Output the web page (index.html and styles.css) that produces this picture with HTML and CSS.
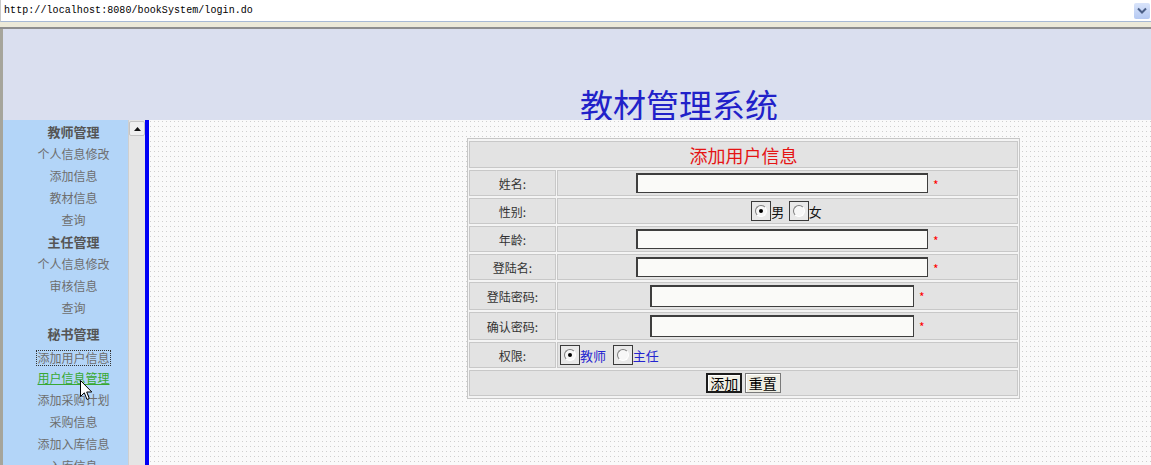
FILE: index.html
```html
<!DOCTYPE html>
<html lang="zh-CN">
<head>
<meta charset="UTF-8">
<meta name="viewport" content="width=device-width, initial-scale=1.0">
<title>教材管理系统</title>
<link rel="stylesheet" href="styles.css">
</head>
<body>
  <div class="addr">
    <div class="addr-box">
      <span class="url">http://localhost:8080/bookSystem/login.do</span>
      <span class="drop">
        <svg width="10" height="7" viewBox="0 0 10 7"><path d="M1 1.5 L5 5.5 L9 1.5" fill="none" stroke="#4b5f86" stroke-width="2"/></svg>
      </span>
    </div>
  </div>

  <div class="frame">
    <div class="header">
      <h1 class="title">教材管理系统</h1>
    </div>

    <div class="content">
      <div class="side">
        <div class="menu">
          <div class="group">教师管理</div>
          <div class="item">个人信息修改</div>
          <div class="item">添加信息</div>
          <div class="item">教材信息</div>
          <div class="item">查询</div>
          <div class="group">主任管理</div>
          <div class="item">个人信息修改</div>
          <div class="item">审核信息</div>
          <div class="item">查询</div>
          <div class="group group-gap">秘书管理</div>
          <div class="item"><span class="focus">添加用户信息</span></div>
          <div class="item"><span class="hover">用户信息管理</span></div>
          <div class="item">添加采购计划</div>
          <div class="item">采购信息</div>
          <div class="item">添加入库信息</div>
          <div class="item">入库信息</div>
        </div>
      </div>
      <div class="scroll">
        <div class="scroll-up">
          <svg width="7" height="4" viewBox="0 0 7 4"><path d="M0 4 L3.5 0 L7 4 Z" fill="#111"/></svg>
        </div>
      </div>
      <div class="split"></div>

      <div class="main">
        <table class="form">
          <colgroup>
            <col class="c-label">
            <col class="c-val">
          </colgroup>
          <tr class="r-title"><td colspan="2" class="caption">添加用户信息</td></tr>
          <tr class="r-26">
            <td class="label">姓名:</td>
            <td class="val"><input type="text" class="txt"> <span class="req">*</span></td>
          </tr>
          <tr class="r-26">
            <td class="label">性别:</td>
            <td class="val"><span class="radio checked"></span><span class="opt">男</span> <span class="radio"></span><span class="opt">女</span></td>
          </tr>
          <tr class="r-26">
            <td class="label">年龄:</td>
            <td class="val"><input type="text" class="txt"> <span class="req">*</span></td>
          </tr>
          <tr class="r-26">
            <td class="label">登陆名:</td>
            <td class="val"><input type="text" class="txt"> <span class="req">*</span></td>
          </tr>
          <tr class="r-28">
            <td class="label">登陆密码:</td>
            <td class="val"><input type="password" class="pwd"> <span class="req">*</span></td>
          </tr>
          <tr class="r-28">
            <td class="label">确认密码:</td>
            <td class="val"><input type="password" class="pwd"> <span class="req">*</span></td>
          </tr>
          <tr class="r-26">
            <td class="label">权限:</td>
            <td class="val val-left"><span class="radio checked"></span><span class="opt blue">教师</span> <span class="radio"></span><span class="opt blue">主任</span></td>
          </tr>
          <tr class="r-26">
            <td colspan="2" class="buttons">
              <button type="button" class="btn btn-default">添加</button>
              <button type="button" class="btn">重置</button>
            </td>
          </tr>
        </table>
      </div>
    </div>
  </div>

  <svg class="cursor" width="13" height="21" viewBox="0 0 13 21">
    <path d="M0.5 0.5 L0.5 16.5 L4.3 12.8 L7 19.5 L9.3 18.5 L6.7 12 L11.8 12 Z" fill="#fff" stroke="#000" stroke-width="1"/>
  </svg>
</body>
</html>
```

FILE: styles.css
```css
body {
  margin: 0;
  height: 465px;
  overflow: hidden;
  font-family: "Noto Sans CJK SC", sans-serif;
  background-color: #ece9d8;
}
.addr {
  height: 27px;
  background-color: #ece9d8;
  border-bottom: 2px solid #8e8e8e;
}
.addr-box {
  display: flex;
  align-items: center;
  justify-content: space-between;
  height: 21px;
  background-color: #fff;
  border-bottom: 1px solid #a7b9d4;
  border-left: 1px solid #c9c9c9;
}
.url {
  font-family: "Liberation Mono", monospace;
  font-size: 10px;
  letter-spacing: 0.07px;
  color: #000;
  padding-left: 3px;
}
.drop {
  display: flex;
  align-items: center;
  justify-content: center;
  width: 16px;
  height: 16px;
  margin-right: 1px;
  background: linear-gradient(#d9e4fa, #b5c9f2);
  border-radius: 2px;
}
.frame {
  border-left: 3px solid #a6a59b;
  height: 436px;
}
.header {
  height: 91px;
  background-color: #dadfef;
  box-sizing: border-box;
  padding-top: 59px;
  padding-left: 577px;
}
.title {
  margin: 0;
  font-size: 33px;
  line-height: 33px;
  font-weight: normal;
  color: #2121c9;
  white-space: nowrap;
}
.content {
  display: flex;
  height: 345px;
}
.side {
  width: 125px;
  background-color: #b3d5f8;
  overflow: hidden;
}
.menu {
  padding: 1px 0 0 16px;
  text-align: center;
}
.group {
  font-size: 13px;
  font-weight: bold;
  color: #555;
  line-height: 22px;
}
.group-gap {
  margin-top: 4px;
}
.item {
  font-size: 12px;
  color: #6e6e6e;
  line-height: 22px;
}
.focus {
  display: inline-block;
  line-height: 14px;
  outline: 1px dotted #333;
  vertical-align: middle;
}
.hover {
  color: #38a832;
  text-decoration: underline;
}
.scroll {
  width: 16px;
  background-color: #e5e5e5;
  border-left: 1px solid #cfcfcf;
}
.scroll-up {
  display: flex;
  align-items: center;
  justify-content: center;
  height: 15px;
  margin-top: 1px;
  background-color: #efefef;
  border: 1px solid #c4c4c4;
  border-radius: 2px;
  box-sizing: border-box;
}
.split {
  width: 4px;
  background-color: #0000f6;
}
.main {
  flex: 1;
  padding: 18px 0 0 318px;
  background-color: #fafafa;
  background-image: radial-gradient(circle at 1.5px 1.5px, #cfcfcf 0.6px, transparent 1px);
  background-size: 4px 5px;
}
.form {
  width: 553px;
  table-layout: fixed;
  border-collapse: separate;
  border-spacing: 1px 2px;
  border: 1px solid #c7c7c7;
  background-color: #f4f4f4;
}
.c-label {
  width: 87px;
}
.c-val {
  width: 461px;
}
.form td {
  padding: 0;
  box-sizing: border-box;
  background-color: #e3e3e3;
  border: 1px solid #c8c8c8;
  font-size: 12px;
  color: #333;
}
.r-title td { height: 27px; }
.r-26 td { height: 26px; }
.r-28 td { height: 28px; }
.form .caption {
  text-align: center;
  font-size: 18px;
  color: #e51414;
  line-height: 20px;
}
.form .label {
  text-align: center;
}
.form .val {
  text-align: center;
  white-space: nowrap;
}
.form .val-left {
  text-align: left;
  padding-left: 2px;
}
.txt,
.pwd {
  box-sizing: border-box;
  margin: 0;
  padding: 0 2px;
  background-color: #fafaf8;
  border: 1px solid #3e3e3e;
  border-top-width: 2px;
  border-left-width: 2px;
  vertical-align: middle;
}
.txt {
  width: 292px;
  height: 20px;
}
.pwd {
  width: 264px;
  height: 22px;
}
.req {
  color: #f00;
  font-size: 12px;
  vertical-align: -3px;
  margin-left: 2px;
}
.radio {
  display: inline-block;
  position: relative;
  width: 20px;
  height: 20px;
  box-sizing: border-box;
  border: 1px solid #3a3a3a;
  background-color: #e9e9e9;
  vertical-align: middle;
}
.radio::before {
  content: "";
  position: absolute;
  left: 3px;
  top: 3px;
  width: 12px;
  height: 12px;
  border-radius: 50%;
  border-top: 1px solid #7d7d7d;
  border-left: 1px solid #7d7d7d;
  border-right: 1px solid #fff;
  border-bottom: 1px solid #fff;
  background-color: #f7f7f7;
  box-sizing: border-box;
}
.radio.checked::after {
  content: "";
  position: absolute;
  left: 7px;
  top: 7px;
  width: 4px;
  height: 4px;
  border-radius: 50%;
  background-color: #000;
}
.opt {
  font-size: 13px;
  color: #111;
  vertical-align: middle;
  margin-right: 2px;
}
.blue {
  color: #2424d0;
  margin-right: 4px;
}
.form .buttons {
  text-align: center;
}
.btn {
  height: 20px;
  margin: 0;
  padding: 0 3px;
  font-family: "Noto Sans CJK SC", sans-serif;
  font-size: 14px;
  line-height: 16px;
  color: #000;
  background-color: #efeee4;
  border: 1px solid #7a7a7a;
  box-shadow: inset 1px 1px #fff;
  vertical-align: middle;
}
.btn-default {
  border: 2px solid #1c1c1c;
  padding: 0 2px;
}
.cursor {
  position: absolute;
  left: 80px;
  top: 380px;
}
```
